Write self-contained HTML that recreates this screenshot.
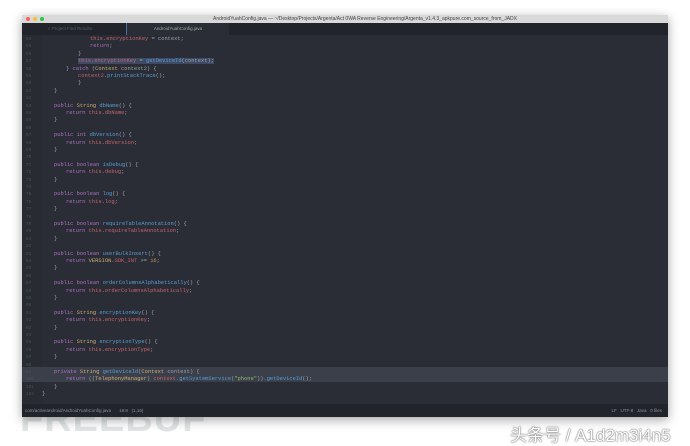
<!DOCTYPE html>
<html><head><meta charset="utf-8"><style>
body{margin:0;width:690px;height:446px;background:#fff;position:relative;overflow:hidden;font-family:"Liberation Sans",sans-serif}
.win{position:absolute;left:22px;top:15px;width:646px;height:402px;background:#2a2d35;box-shadow:0 3px 10px rgba(0,0,0,.35);z-index:2}
.title{position:absolute;left:0;top:0;width:646px;height:8px;background:#d9d9d9;font-size:5px;color:#444;text-align:center;line-height:8px;padding-left:40px;box-sizing:border-box}
.dot{position:absolute;top:2px;width:4px;height:4px;border-radius:50%}
.tabs{position:absolute;left:0;top:8px;width:646px;height:12px;background:#21242b}
.t1{position:absolute;left:0;top:0;width:104px;height:12px;color:#555b66;font-size:4.5px;line-height:12px;padding-left:26px;box-sizing:border-box}
.t2{position:absolute;left:104px;top:0;width:102px;height:12px;background:#2a2d35;border-left:1px solid #4a6fa5;color:#9aa;font-size:4.5px;line-height:12px;text-align:center}
.gut{position:absolute;left:0;top:20px;width:20px;height:368px;background:#282b32}
.ln{position:absolute;left:0;height:7.4px;width:646px;font-family:"Liberation Mono",monospace;font-size:5.4px;line-height:7.4px;color:#9aa1ad;white-space:pre}
.num{position:absolute;left:4px;color:#4b5059;font-size:4.4px}
.code{position:absolute}
.hl{position:absolute;left:0;top:352px;width:646px;height:15px;background:#3b3f4a}
.k{color:#b070c4}.y{color:#cdae74}.b{color:#5a9dd4}.r{color:#c6646c}.g{color:#90b870}.o{color:#c99260}
.sel{background:#3e4a63}
.status{position:absolute;left:0;top:389px;width:646px;height:13px;background:#21242b;font-size:4.5px;color:#8a909a;line-height:13px}
.wm{position:absolute;left:20px;top:398px;font-size:38px;font-weight:bold;color:rgba(205,212,210,.6);letter-spacing:1px;z-index:1}
.cn{position:absolute;left:510px;top:421px;font-size:17px;color:#fff;font-family:"Liberation Sans","Noto Sans CJK SC",sans-serif;text-shadow:0 0 1px #777,0 0 1px #777,0 0 2px #999;z-index:3}
</style></head><body>
<div class="wm">FREEBUF</div>
<div class="win">
<div class="title">AndroidYuahConfig.java — ~/Desktop/Projects/Argenta/Act 0WA Reverse Engineering/Argenta_v1.4.3_apkpure.com_source_from_JADX</div>
<div class="dot" style="left:4px;background:#fc5f57"></div><div class="dot" style="left:11px;background:#fdbc2e"></div><div class="dot" style="left:18px;background:#28c840"></div>
<div class="tabs"><div class="t1">⌕ Project Find Results</div><div class="t2">AndroidYuahConfig.java</div></div>
<div class="gut"></div>
<div class="hl"></div>
<div id="c"></div>
<div class="status"><span style="padding-left:3px">com/activeandroid/AndroidYuahConfig.java</span><span style="padding-left:8px">18:8 &nbsp; (1,16)</span><span style="position:absolute;right:6px">LF &nbsp; UTF-8 &nbsp; Java &nbsp; 0 files</span></div>
</div>
<div class="cn">头条号 / A1d2m3i4n5</div>
<script>
var L=[
[4,'<span class="r">this</span>.<span class="r">encryptionKey</span> = context;'],
[4,'<span class="k">return</span>;'],
[3,'}'],
[3,'<span class="sel"><span class="r">this</span>.<span class="r">encryptionKey</span> = <span class="b">getDeviceId</span>(context);</span>'],
[2,'} <span class="k">catch</span> (<span class="y">Context</span> context2) {'],
[3,'<span class="r">context2</span>.<span class="b">printStackTrace</span>();'],
[3,'}'],[1,'}'],[0,''],
[1,'<span class="k">public</span> <span class="y">String</span> <span class="b">dbName</span>() {'],[2,'<span class="k">return</span> <span class="r">this</span>.<span class="r">dbName</span>;'],[1,'}'],[0,''],
[1,'<span class="k">public</span> <span class="k">int</span> <span class="b">dbVersion</span>() {'],[2,'<span class="k">return</span> <span class="r">this</span>.<span class="r">dbVersion</span>;'],[1,'}'],[0,''],
[1,'<span class="k">public</span> <span class="k">boolean</span> <span class="b">isDebug</span>() {'],[2,'<span class="k">return</span> <span class="r">this</span>.<span class="r">debug</span>;'],[1,'}'],[0,''],
[1,'<span class="k">public</span> <span class="k">boolean</span> <span class="b">log</span>() {'],[2,'<span class="k">return</span> <span class="r">this</span>.<span class="r">log</span>;'],[1,'}'],[0,''],
[1,'<span class="k">public</span> <span class="k">boolean</span> <span class="b">requireTableAnnotation</span>() {'],[2,'<span class="k">return</span> <span class="r">this</span>.<span class="r">requireTableAnnotation</span>;'],[1,'}'],[0,''],
[1,'<span class="k">public</span> <span class="k">boolean</span> <span class="b">userBulkInsert</span>() {'],[2,'<span class="k">return</span> <span class="y">VERSION</span>.<span class="r">SDK_INT</span> &gt;= <span class="o">16</span>;'],[1,'}'],[0,''],
[1,'<span class="k">public</span> <span class="k">boolean</span> <span class="b">orderColumnsAlphabetically</span>() {'],[2,'<span class="k">return</span> <span class="r">this</span>.<span class="r">orderColumnsAlphabetically</span>;'],[1,'}'],[0,''],
[1,'<span class="k">public</span> <span class="y">String</span> <span class="b">encryptionKey</span>() {'],[2,'<span class="k">return</span> <span class="r">this</span>.<span class="r">encryptionKey</span>;'],[1,'}'],[0,''],
[1,'<span class="k">public</span> <span class="y">String</span> <span class="b">encryptionType</span>() {'],[2,'<span class="k">return</span> <span class="r">this</span>.<span class="r">encryptionType</span>;'],[1,'}'],[0,''],
[1,'<span class="k">private</span> <span class="y">String</span> <span class="b">getDeviceId</span>(<span class="y">Context</span> context) {'],
[2,'<span class="k">return</span> ((<span class="y">TelephonyManager</span>) <span class="r">context</span>.<span class="b">getSystemService</span>(<span class="g">"phone"</span>)).<span class="b">getDeviceId</span>();'],
[1,'}'],[0,'}']];
var h='';for(var i=0;i<L.length;i++){var t=21+i*7.4;h+='<div class="ln" style="top:'+t+'px"><span class="num">'+(54+i)+'</span><span class="code" style="left:'+(20+L[i][0]*12)+'px">'+L[i][1]+'</span></div>';}
document.getElementById('c').innerHTML=h;
</script>
</body></html>
